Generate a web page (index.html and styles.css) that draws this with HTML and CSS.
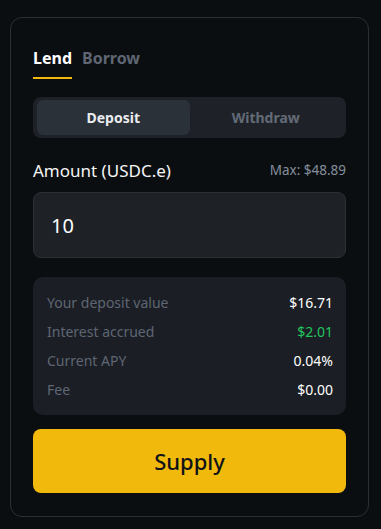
FILE: index.html
```html
<!DOCTYPE html>
<html>
<head>
<meta charset="utf-8">
<link rel="stylesheet" href="styles.css">
</head>
<body>
<div class="card">
  <div class="tabs">
    <span class="tab active">Lend</span>
    <span class="tab">Borrow</span>
  </div>
  <div class="segment">
    <div class="seg active">Deposit</div>
    <div class="seg">Withdraw</div>
  </div>
  <div class="amount-row">
    <span class="amount-label">Amount (USDC.e)</span>
    <span class="max">Max: $48.89</span>
  </div>
  <div class="input">10</div>
  <div class="info">
    <div class="row"><span class="label">Your deposit value</span><span class="value">$16.71</span></div>
    <div class="row"><span class="label">Interest accrued</span><span class="value green">$2.01</span></div>
    <div class="row"><span class="label">Current APY</span><span class="value">0.04%</span></div>
    <div class="row"><span class="label">Fee</span><span class="value">$0.00</span></div>
  </div>
  <div class="button">Supply</div>
</div>
</body>
</html>
```
FILE: styles.css
```css
* { box-sizing: border-box; }
html, body { margin: 0; padding: 0; }
body {
  background: #0b0e11;
  font-family: "Noto Sans", "Open Sans", sans-serif;
  color: #eaecef;
  width: 381px;
  height: 529px;
  overflow: hidden;
}
.card {
  margin: 17px 0 0 10px;
  width: 359px;
  height: 500px;
  border: 1px solid #2b2f36;
  border-radius: 12px;
  padding: 28px 22px 23px;
  display: flex;
  flex-direction: column;
}
.tabs {
  display: flex;
  gap: 10px;
}
.tab {
  font-size: 16px;
  font-weight: 700;
  line-height: 24px;
  padding-bottom: 7px;
  border-bottom: 2px solid transparent;
  color: #5e6673;
}
.tab.active {
  color: #ffffff;
  border-bottom-color: #f0b90b;
}
.segment {
  margin-top: 18px;
  height: 41px;
  padding: 3px 4px;
  background: #1e2228;
  border-radius: 8px;
  display: flex;
}
.seg {
  flex: 1;
  display: flex;
  align-items: center;
  justify-content: center;
  font-size: 14px;
  font-weight: 700;
  color: #636b77;
  border-radius: 6px;
}
.seg.active {
  background: #2b3139;
  color: #eaecef;
}
.amount-row {
  margin-top: 22px;
  display: flex;
  justify-content: space-between;
  align-items: center;
  line-height: 22px;
}
.amount-label {
  font-size: 17px;
  color: #f5f5f5;
}
.max {
  font-size: 13.5px;
  color: #848e9c;
  margin-top: -2px;
}
.input {
  margin-top: 10px;
  height: 66px;
  background: #1e2126;
  border: 1px solid #2b2f36;
  border-radius: 8px;
  padding-left: 17px;
  display: flex;
  align-items: center;
  font-size: 20px;
  color: #ffffff;
}
.info {
  margin-top: 19px;
  background: #1b1e25;
  border-radius: 10px;
  padding: 16px 13px 15px 14px;
  display: flex;
  flex-direction: column;
  gap: 9px;
}
.row {
  display: flex;
  justify-content: space-between;
  line-height: 20px;
  font-size: 14px;
}
.label { color: #5e6673; }
.value { color: #ffffff; }
.value.green { color: #22c55e; }
.button {
  margin-top: 14px;
  height: 64px;
  background: #f0b90b;
  border-radius: 8px;
  display: flex;
  align-items: center;
  justify-content: center;
  font-size: 22px;
  font-weight: 500;
  color: #111318;
}
```
